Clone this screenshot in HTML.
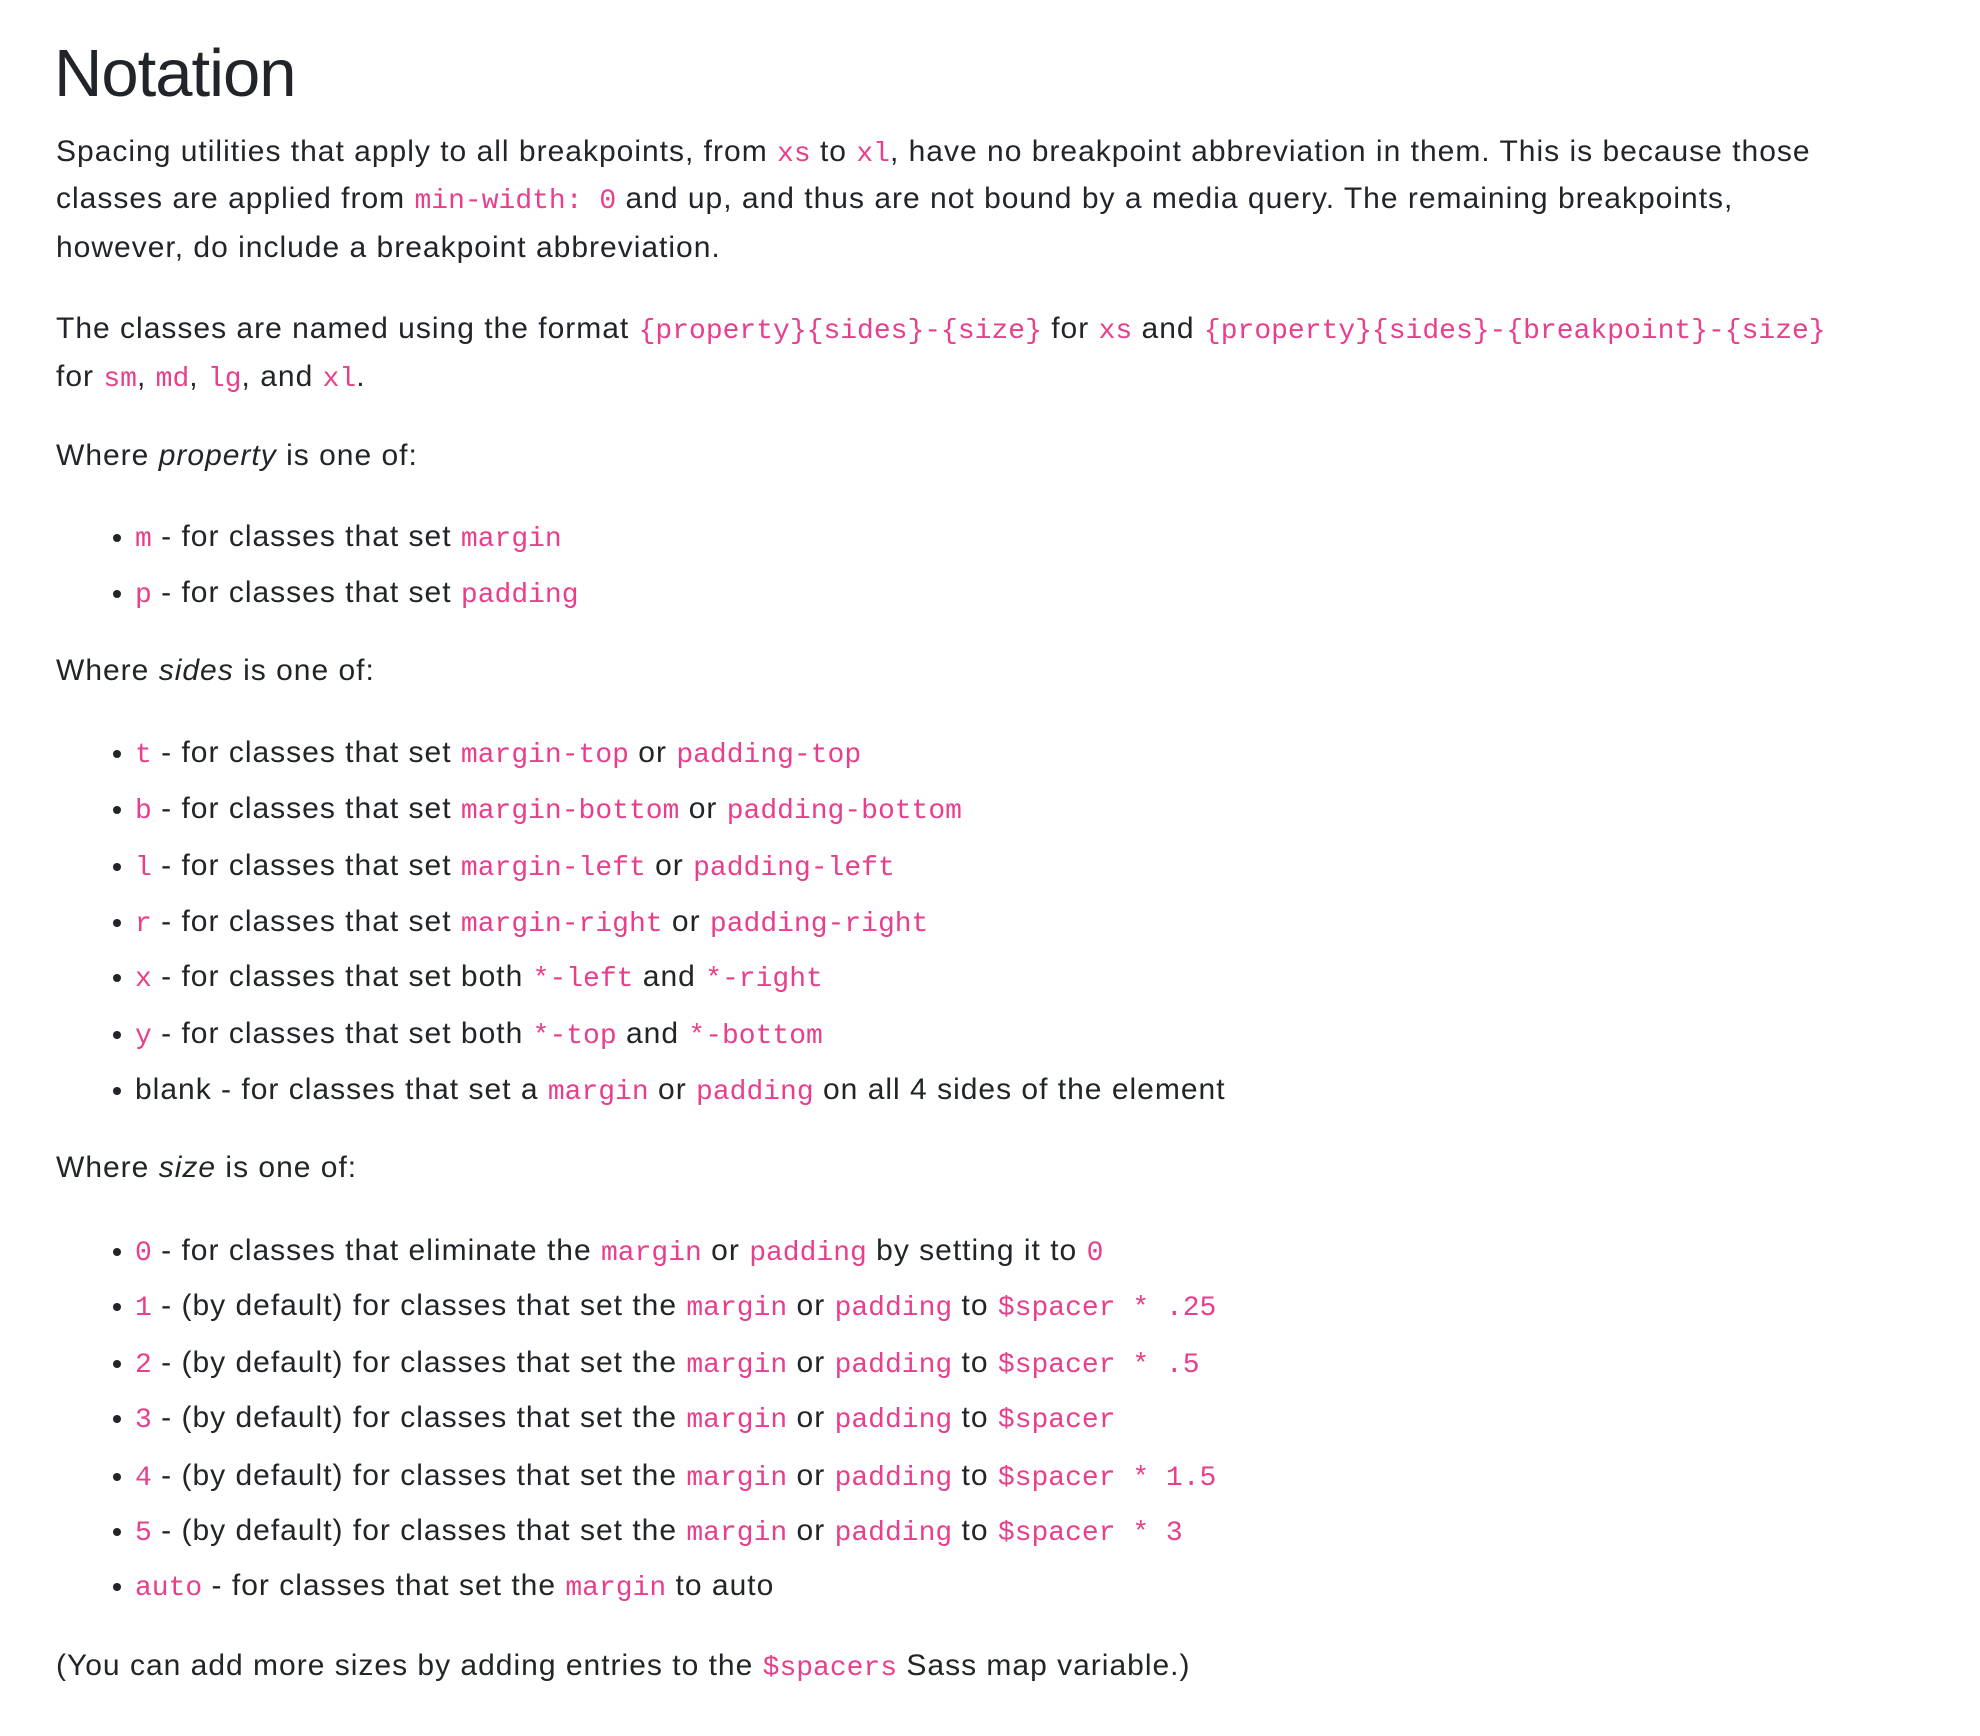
<!DOCTYPE html>
<html><head><meta charset="utf-8"><style>
html,body{margin:0;padding:0;background:#fff;}
body{width:1980px;height:1736px;position:relative;overflow:hidden;font-family:"Liberation Sans",Arial,sans-serif;color:#212529;font-size:30px;letter-spacing:1px;}
.l{position:absolute;left:56px;white-space:nowrap;line-height:48px;height:48px;}
.b{left:135px;}
.b::before{content:"";position:absolute;left:-22px;top:21px;width:8px;height:8px;border-radius:50%;background:#212529;}
code{font-family:"Liberation Mono","DejaVu Sans Mono",monospace;color:#e83e8c;font-size:28px;letter-spacing:0;}
h2{position:absolute;left:54px;top:34px;margin:0;font-size:67px;line-height:80px;font-weight:500;letter-spacing:-1px;}
</style></head><body>
<h2>Notation</h2>
<div class="l" style="top:128px">Spacing utilities that apply to all breakpoints, from <code>xs</code> to <code>xl</code>, have no breakpoint abbreviation in them. This is because those</div>
<div class="l" style="top:175px">classes are applied from <code>min-width: 0</code> and up, and thus are not bound by a media query. The remaining breakpoints,</div>
<div class="l" style="top:224px">however, do include a breakpoint abbreviation.</div>
<div class="l" style="top:305px">The classes are named using the format <code>{property}{sides}-{size}</code> for <code>xs</code> and <code>{property}{sides}-{breakpoint}-{size}</code></div>
<div class="l" style="top:353px">for <code>sm</code>, <code>md</code>, <code>lg</code>, and <code>xl</code>.</div>
<div class="l" style="top:432px">Where <i>property</i> is one of:</div>
<div class="l b" style="top:513px"><code>m</code> - for classes that set <code>margin</code></div>
<div class="l b" style="top:569px"><code>p</code> - for classes that set <code>padding</code></div>
<div class="l" style="top:647px">Where <i>sides</i> is one of:</div>
<div class="l b" style="top:729px"><code>t</code> - for classes that set <code>margin-top</code> or <code>padding-top</code></div>
<div class="l b" style="top:785px"><code>b</code> - for classes that set <code>margin-bottom</code> or <code>padding-bottom</code></div>
<div class="l b" style="top:842px"><code>l</code> - for classes that set <code>margin-left</code> or <code>padding-left</code></div>
<div class="l b" style="top:898px"><code>r</code> - for classes that set <code>margin-right</code> or <code>padding-right</code></div>
<div class="l b" style="top:953px"><code>x</code> - for classes that set both <code>*-left</code> and <code>*-right</code></div>
<div class="l b" style="top:1010px"><code>y</code> - for classes that set both <code>*-top</code> and <code>*-bottom</code></div>
<div class="l b" style="top:1066px">blank - for classes that set a <code>margin</code> or <code>padding</code> on all 4 sides of the element</div>
<div class="l" style="top:1144px">Where <i>size</i> is one of:</div>
<div class="l b" style="top:1227px"><code>0</code> - for classes that eliminate the <code>margin</code> or <code>padding</code> by setting it to <code>0</code></div>
<div class="l b" style="top:1282px"><code>1</code> - (by default) for classes that set the <code>margin</code> or <code>padding</code> to <code>$spacer * .25</code></div>
<div class="l b" style="top:1339px"><code>2</code> - (by default) for classes that set the <code>margin</code> or <code>padding</code> to <code>$spacer * .5</code></div>
<div class="l b" style="top:1394px"><code>3</code> - (by default) for classes that set the <code>margin</code> or <code>padding</code> to <code>$spacer</code></div>
<div class="l b" style="top:1452px"><code>4</code> - (by default) for classes that set the <code>margin</code> or <code>padding</code> to <code>$spacer * 1.5</code></div>
<div class="l b" style="top:1507px"><code>5</code> - (by default) for classes that set the <code>margin</code> or <code>padding</code> to <code>$spacer * 3</code></div>
<div class="l b" style="top:1562px"><code>auto</code> - for classes that set the <code>margin</code> to auto</div>
<div class="l" style="top:1642px">(You can add more sizes by adding entries to the <code>$spacers</code> Sass map variable.)</div>
</body></html>
